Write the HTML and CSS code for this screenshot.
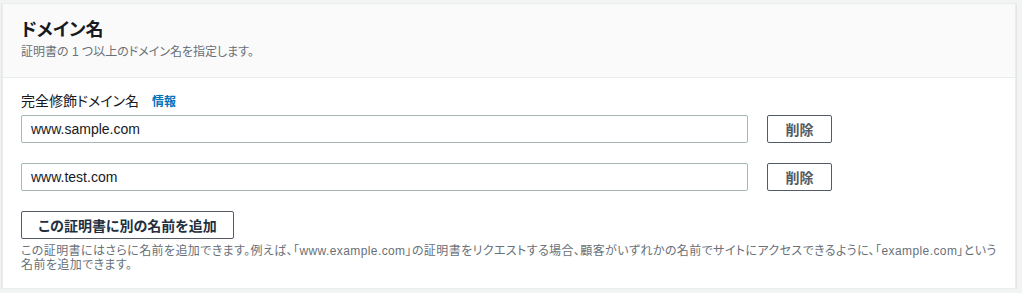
FILE: index.html
```html
<!DOCTYPE html>
<html lang="ja">
<head>
    <meta charset="UTF-8">
    <title>ドメイン名</title>
    <link rel="stylesheet" href="styles.css">
</head>
<body>
    <div class="panel">
        <!-- ヘッダー -->
        <div class="panel-header">
            <h2>ドメイン名</h2>
            <p class="subtitle">証明書の 1 つ以上のドメイン名を指定します。</p>
        </div>

        <div class="panel-body">
            <div class="label-row">
                <span class="label">完全修飾ドメイン名</span>
                <a class="info" href="#">情報</a>
            </div>

            <div class="domain-row">
                <input type="text" class="domain-input" value="www.sample.com">
                <button class="btn btn-small">削除</button>
            </div>
            <div class="domain-row">
                <input type="text" class="domain-input" value="www.test.com">
                <button class="btn btn-small">削除</button>
            </div>

            <button class="btn btn-add">この証明書に別の名前を追加</button>
            <p class="hint">この証明書にはさらに名前を追加できます。例えば、「www.example.com」の証明書をリクエストする場合、顧客がいずれかの名前でサイトにアクセスできるように、「example.com」という名前を追加できます。</p>
        </div>
    </div>
</body>
</html>
```

FILE: styles.css
```css
body {
    margin: 0;
    padding: 3px 6px 0 2px;
    background-color: #f2f3f3;
    font-family: "Liberation Sans", "Noto Sans CJK JP", sans-serif;
    font-feature-settings: "palt";
    color: #16191f;
}

.panel {
    background-color: #fff;
    border: 1px solid #eaeded;
    box-shadow: 0 1px 1px 0 rgba(0, 28, 36, 0.3);
}

.panel-header {
    background-color: #fafafa;
    border-bottom: 1px solid #eaeded;
    padding: 14px 18px 17px;
}

.panel-header h2 {
    margin: 0;
    font-size: 18px;
    line-height: 24px;
    font-weight: bold;
}

.subtitle {
    margin: 2px 0 0;
    font-size: 12px;
    line-height: 16px;
    color: #687078;
}

.panel-body {
    padding: 14px 18px 16px;
}

.label-row {
    display: flex;
    align-items: baseline;
    gap: 13px;
    font-size: 14px;
    line-height: 18px;
}

.info {
    font-size: 12px;
    font-weight: bold;
    color: #0073bb;
    text-decoration: none;
}

.domain-row {
    display: flex;
    align-items: center;
    gap: 19px;
    margin-top: 4px;
    margin-bottom: 20px;
}

.domain-input {
    width: 727px;
    height: 28px;
    box-sizing: border-box;
    border: 1px solid #aab7b8;
    border-radius: 2px;
    padding: 0 9px;
    font-family: inherit;
    font-size: 14px;
    color: #16191f;
}

.btn {
    background: #fff;
    border: 1px solid #545b64;
    border-radius: 2px;
    color: #545b64;
    font-family: inherit;
    font-feature-settings: "palt";
    font-size: 14px;
    font-weight: bold;
    height: 28px;
    cursor: pointer;
}

.btn-small {
    width: 65px;
}

.btn-add {
    width: 213px;
    color: #232f3e;
}

.hint {
    margin: 5px 0 0;
    font-size: 12px;
    line-height: 14px;
    letter-spacing: 0.4px;
    color: #687078;
}
```
